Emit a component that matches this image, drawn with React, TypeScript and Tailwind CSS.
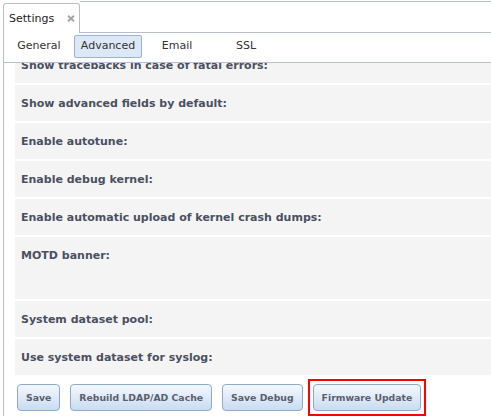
const rows = [
  { label: "Show tracebacks in case of fatal errors:" },
  { label: "Show advanced fields by default:" },
  { label: "Enable autotune:" },
  { label: "Enable debug kernel:" },
  { label: "Enable automatic upload of kernel crash dumps:" },
  { label: "MOTD banner:", tall: true },
  { label: "System dataset pool:" },
  { label: "Use system dataset for syslog:" },
];

const subTabs = ["General", "Advanced", "Email", "SSL"];

const buttons = ["Save", "Rebuild LDAP/AD Cache", "Save Debug", "Firmware Update"];

export default function App() {
  return (
    <div className="h-[416px] w-[491px] overflow-hidden bg-white pt-px font-['DejaVu_Sans',Verdana,sans-serif]">
      {/* top tab strip */}
      <div className="flex h-[32px]">
        <div className="ml-[3px] mt-[2px] flex h-[30px] w-[77px] items-center rounded-t-[3px] border-x border-t border-[#b9c0cb] pl-[5px]">
          <span className="text-[11px] leading-[14px] text-[#222]">Settings</span>
          <svg className="ml-auto mr-[4px]" width="8" height="7" viewBox="0 0 8 7">
            <path d="M1 0.8 L7 6.2 M7 0.8 L1 6.2" stroke="#a3a3a3" strokeWidth="1.9" />
          </svg>
        </div>
        <div className="flex-1 border-y border-[#b9c0cb]" />
      </div>

      <div className="ml-[3px] flex h-[383px] flex-col border-l border-[#b9c0cb]">
        {/* sub tabs */}
        <div className="flex h-[30px] shrink-0 items-start gap-px border-b border-[#b9c0cb] pl-px pt-[2px]">
          {subTabs.map((t) => (
            <div
              key={t}
              className={
                t === "Advanced"
                  ? "flex h-[23px] w-[68px] items-center justify-center rounded-[2px] border border-[#98b3d4] bg-[#dce8f6] text-[11px] text-[#333]"
                  : "flex h-[23px] w-[68px] items-center justify-center rounded-[2px] border border-transparent text-[11px] text-[#333]"
              }
            >
              {t}
            </div>
          ))}
        </div>

        {/* scrolled form */}
        <div className="h-[312px] shrink-0 overflow-hidden">
          <div className="-mt-[16px] flex flex-col gap-[2px] pl-[11px]">
            {rows.map((r) => (
              <div
                key={r.label}
                className={
                  (r.tall ? "h-[62px] " : "h-[36px] ") +
                  "shrink-0 bg-[#f4f4f4] pl-[6px] pt-[12px] text-[11px] font-bold leading-[14px] text-[#4a5061]"
                }
              >
                {r.label}
              </div>
            ))}
          </div>
        </div>

        {/* actions */}
        <div className="flex gap-[10px] pl-[13px] pt-[9px]">
          {buttons.map((b) => (
            <div key={b} className="relative">
              <button className="h-[27px] rounded-[4px] border border-[#8ea9c9] bg-linear-to-b from-[#f4f8fe] to-[#c9dcf1] px-[8px] text-[9.3px] font-bold text-[#5b606c]">
                {b}
              </button>
              {b === "Firmware Update" && (
                <span className="pointer-events-none absolute -inset-[5px] border-2 border-[#ff0000]" />
              )}
            </div>
          ))}
        </div>
      </div>
    </div>
  );
}
